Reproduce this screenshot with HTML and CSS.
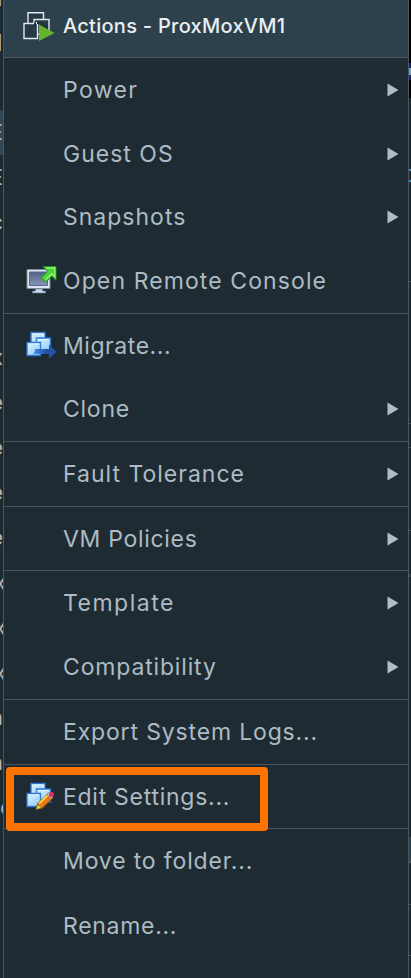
FILE: index.html
```html
<!DOCTYPE html>
<html lang="en">
<head>
<meta charset="utf-8">
<title>Actions - ProxMoxVM1</title>
<link rel="stylesheet" href="styles.css">
</head>
<body>
<svg class="defs" width="0" height="0" aria-hidden="true">
  <defs>
    <linearGradient id="blue" x1="0" y1="0" x2="1" y2="1"><stop offset="0" stop-color="#d9f3ff"/><stop offset="1" stop-color="#8fcaf8"/></linearGradient>
    <linearGradient id="screen" x1="0" y1="0" x2="0" y2="1"><stop offset="0" stop-color="#52627f"/><stop offset="1" stop-color="#8497b7"/></linearGradient>
    <linearGradient id="go" x1="0" y1="0" x2="1" y2="0"><stop offset="0" stop-color="#4d98ed"/><stop offset=".6" stop-color="#2452a8"/></linearGradient>
    <symbol id="arrow" viewBox="0 0 12 14"><path d="M.5 .5L11.5 7L.5 13.5Z" fill="#afbdc5"/></symbol>
    <symbol id="vms" viewBox="0 0 32 32">
      <g fill="url(#blue)" stroke="#2e76d2" stroke-width="1.3"><path d="M5 2.500h14v13H5z"/><path d="M10.500 8h14v13h-14z"/><path d="M1 12.500h13.500v13H1z"/></g>
      <path d="M6.500 4h11v3M12 9.500h11M2.500 14h10.500" fill="none" stroke="#e9faff" stroke-width="1.200"/>
      <path d="M10.500 12.500V8h8.500" fill="none" stroke="#4a91e3" stroke-width="1.500"/>
    </symbol>
  </defs>
</svg>
<div class="screen">
  <div class="behind behind-left" aria-hidden="true">
    <div class="tree-top"><i></i><i></i></div>
    <span class="selected">E</span><span>E</span><span>c</span><span></span><span></span>
    <span>x</span><span>e</span><span>e</span><span>e</span><span>e</span><span class="cross">x</span><span class="cross">x</span><span class="cross">x</span><span>n</span><span>n</span><span class="round">o</span>
  </div>
  <nav class="menu">
    <header class="title">
      <svg class="icon" viewBox="0 0 32 32"><g fill="#263944" stroke="#e1e8ed" stroke-width="1.400"><path d="M5 2.700h15.500V19H5z"/><path d="M11 9.500h15V24H11z"/><path d="M13.500 12v11" fill="none"/><path d="M1 13.500h13.500v15H1z"/></g><path d="M12 12.500v4M14 13h3l8 5" stroke="#20313b" fill="none" stroke-width="2"/><path d="M16 14.500L31.500 23L16 31Z" fill="#65b32e"/></svg>
      <span>Actions - ProxMoxVM1</span>
    </header>
    <section class="group g4">
      <div class="row"><span class="power">Power</span><svg class="more"><use href="#arrow"/></svg></div>
      <div class="row"><span class="guest">Guest OS</span><svg class="more"><use href="#arrow"/></svg></div>
      <div class="row"><span class="snap">Snapshots</span><svg class="more"><use href="#arrow"/></svg></div>
      <div class="row"><svg class="icon" viewBox="0 0 32 32"><path d="M1 4.500h23v19H1z" fill="#dfe4ee" stroke="#7f8999"/><path d="M3.500 7h18v13.500h-18z" fill="url(#screen)" stroke="#536a99"/><path d="M9.500 24h7v2h3v2H6.500v-2h3z" fill="#c7d5ea" stroke="#687b97" stroke-width=".6"/><path d="M17 1.500h13v14l-4-4.300-6.500 6-4.500-4.500 6.600-6.200z" fill="#4bd339" stroke="#24911d"/><path d="M20 2.800h8.800v9l-3-3.200-6.100 6" fill="none" stroke="#9cf785" stroke-width="1.200"/></svg><span class="console">Open Remote Console</span></div>
    </section>
    <section class="group g2">
      <div class="row"><svg class="icon"><use href="#vms"/><path d="M9 19h14v-4.500L30.500 22L23 28.500V24H13q-5-1-8 1q4-1 4-6z" fill="url(#go)"/></svg><span class="migrate">Migrate...</span></div>
      <div class="row"><span class="clone">Clone</span><svg class="more"><use href="#arrow"/></svg></div>
    </section>
    <section class="group g1"><div class="row"><span class="fault">Fault Tolerance</span><svg class="more"><use href="#arrow"/></svg></div></section>
    <section class="group g1 short"><div class="row"><span class="policy">VM Policies</span><svg class="more"><use href="#arrow"/></svg></div></section>
    <section class="group g2 tall">
      <div class="row"><span class="template">Template</span><svg class="more"><use href="#arrow"/></svg></div>
      <div class="row"><span class="compat">Compatibility</span><svg class="more"><use href="#arrow"/></svg></div>
    </section>
    <section class="group g1"><div class="row"><span class="export">Export System Logs...</span></div></section>
    <section class="group g1 short"><div class="row"><svg class="icon"><use href="#vms"/><path d="M10 28l2-6 10-9 4.500 4.500-10 9.500z" fill="#e87b17" stroke="#78380e"/><path d="M13 22.500l9-8.500" stroke="#ffd44b" stroke-width="2"/><path d="M10 28.500l1.500-5 4.500 3.500z" fill="#f2d64b" stroke="#726016" stroke-width=".6"/><path d="M20.500 13.500l2.200-2 4.500 4.500-2 2z" fill="#c9c9c9" stroke="#656565" stroke-width=".7"/><circle cx="25.500" cy="13.500" r="2.600" fill="#df2d62"/></svg><span class="edit">Edit Settings...</span></div></section>
    <section class="group last">
      <div class="row"><span class="move">Move to folder...</span></div>
      <div class="row"><span class="rename">Rename...</span></div>
    </section>
    <div class="highlight"></div>
  </nav>
  <div class="behind behind-right" aria-hidden="true">
    <div class="dark"><i></i></div><div class="link"></div><div class="r1"></div><div class="r2"></div><div class="r3"></div><div class="r4"></div><div class="r5"></div><div class="r6"></div><div class="r7"></div><div class="r8"></div>
  </div>
</div>
</body>
</html>
```
FILE: styles.css
```css
* { box-sizing: border-box; }
body { margin: 0; background: #1b2930; overflow: hidden; font-family: Inter, "Noto Sans", sans-serif; }
.defs { position: absolute; }
.screen { display: grid; grid-template-columns: 3px 406px 2px; width: 411px; height: 978px; overflow: hidden; }
.behind { overflow: hidden; background: #1b2930; }
.behind-left { display: flex; flex-direction: column; }
.behind-left span { flex: 0 0 45px; display: flex; align-items: center; justify-content: flex-end; color: #b7b4ad; font-size: 22px; line-height: 45px; }
.behind-left .selected { background: #304653; }
.behind-left .cross { justify-content: flex-start; margin-left: -6px; }
.behind-left .round { justify-content: flex-start; color: #8eaecb; }
.tree-top { flex: 0 0 110px; display: flex; flex-direction: column; gap: 28px; }
.tree-top i { width: 1px; height: 17px; background: #ad9a78; }
.tree-top i:first-child { height: 6px; }
.menu { position: relative; display: flex; flex-direction: column; height: 978px; border: solid #4a5761; border-width: 0 1px; background: #1f2b32; color: #adbbc4; overflow: hidden; }
.title { flex: 0 0 58px; display: grid; grid-template-columns: 40px 1fr; align-items: center; padding: 0 10px 5px 19px; border-bottom: 1px solid #4a5a66; background: #2d414c; color: #e9eef2; font-size: 20px; font-weight: 500; white-space: nowrap; letter-spacing: .27px; }
.group { flex: none; display: flex; flex-direction: column; border-bottom: 1px solid #48555f; }
.g4 { height: 256px; }
.g2 { height: 128px; }
.g1 { height: 65px; }
.short { height: 64px; }
.tall { height: 129px; }
.last { height: 129px; border: 0; }
.row { flex: 1; min-height: 0; display: grid; grid-template-columns: 38px 1fr 12px; align-items: center; padding: 0 9px 0 21px; font-size: 23px; white-space: nowrap; }
.row span { grid-column: 2; grid-row: 1; }
.power { letter-spacing: 1.4px; }
.guest, .snap, .fault { letter-spacing: 1px; }
.console { letter-spacing: 1.1px; }
.migrate { letter-spacing: .55px; }
.clone { letter-spacing: .75px; }
.policy { letter-spacing: .7px; }
.template { letter-spacing: 1.5px; }
.compat, .export { letter-spacing: .84px; }
.edit { letter-spacing: .73px; }
.move { letter-spacing: .85px; }
.rename { letter-spacing: .7px; }
.icon { display: block; width: 32px; height: 32px; }
.row .icon { grid-column: 1; grid-row: 1; margin-left: 1px; }
.more { grid-column: 3; grid-row: 1; width: 12px; height: 14px; }
.highlight { position: absolute; left: 2px; top: 767px; width: 262px; height: 64px; border: 8px solid #ff7300; border-radius: 4px; }
.behind-right { display: flex; flex-direction: column; }
.behind-right > div { flex: none; }
.dark { height: 98px; padding-top: 63px; background: #000; }
.dark i { display: block; height: 17px; background: #7798c0; border: solid #1a2470; border-width: 5px 0; }
.link { height: 84px; padding-top: 71px; border-bottom: 2px solid #3c92b9; }
.link::before { content: ""; display: block; height: 2px; background: #3c92b9; }
.r1 { height: 100px; border-bottom: 1px solid #46535b; }
.r2 { height: 142px; border-bottom: 1px solid #46535b; }
.r3 { height: 24px; border-bottom: 1px solid #46535b; }
.r4 { height: 83px; border-bottom: 1px solid #46535b; }
.r5 { height: 46px; border-bottom: 3px solid #38444b; }
.r6 { height: 286px; padding-top: 260px; border-bottom: 3px solid #46535b; }
.r6::before { content: ""; display: block; height: 23px; background: #2d414c; }
.r7 { height: 42px; border-bottom: 1px solid #46535b; }
.r8 { height: 51px; border-bottom: 1px solid #46535b; }
```
